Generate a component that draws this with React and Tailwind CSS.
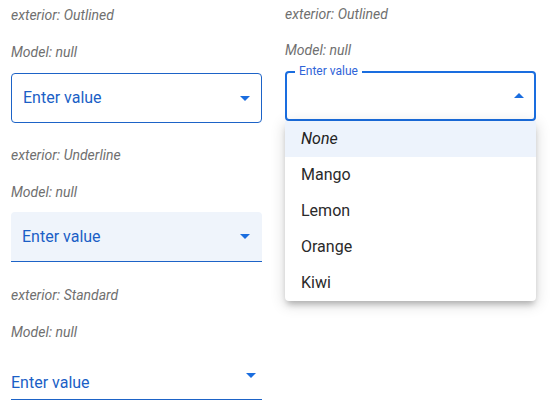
import React from "react";

function Caret({ up = false, className = "" }) {
  return (
    <svg width="10" height="5" viewBox="0 0 10 5" className={className}>
      <path d={up ? "M0 5 L10 5 L5 0 Z" : "M0 0 L10 0 L5 5 Z"} fill="#1a6ddf" />
    </svg>
  );
}

function Labels({ kind, shift = false }) {
  return (
    <>
      <div className={["text-[14px] leading-[16px] italic text-[#707070]", shift ? "mt-[6px]" : "mt-[7px]"].join(" ")}>
        exterior: {kind}
      </div>
      <div className={["text-[14px] leading-[16px] italic text-[#707070]", shift ? "mt-[20px]" : "mt-[21px]"].join(" ")}>
        Model: null
      </div>
    </>
  );
}

const fruits = ["Mango", "Lemon", "Orange", "Kiwi"];

export default function App() {
  return (
    <div
      className="flex gap-[23px] pl-[11px] bg-white w-[552px] h-[411px] overflow-hidden"
      style={{ fontFamily: "Roboto, 'Liberation Sans', sans-serif" }}
    >
      {/* Left column */}
      <div className="w-[251px] flex flex-col">
        <div className="h-[140px]">
          <Labels kind="Outlined" />
          <div className="mt-[13px] h-[50px] rounded-[4px] border border-[#1d63c7] flex items-center justify-between pl-[11px] pr-[11px]">
            <span className="text-[16px] text-[#1b5fc6]">Enter value</span>
            <Caret />
          </div>
        </div>
        <div className="h-[140px]">
          <Labels kind="Underline" />
          <div className="mt-[12px] h-[50px] rounded-t-[4px] bg-[#eff4fb] border-b border-[#1d63c7] flex items-center justify-between pl-[11px] pr-[12px]">
            <span className="text-[16px] text-[#1b5fc6]">Enter value</span>
            <Caret />
          </div>
        </div>
        <div className="h-[131px]">
          <Labels kind="Standard" />
          <div className="mt-[13px] h-[47px] border-b border-[#1d63c7] flex items-start justify-between pr-[6px] pt-[20px]">
            <span className="text-[16px] leading-[19px] text-[#1b5fc6]">Enter value</span>
            <Caret />
          </div>
        </div>
      </div>

      {/* Right column */}
      <div className="w-[251px] relative">
        <Labels kind="Outlined" shift />
        <div className="relative mt-[13px] h-[50px] rounded-[4px] border-2 border-[#1a6ddf] flex items-center justify-end pr-[10px]">
          <span className="absolute -top-[9px] left-[8px] bg-white px-[4px] text-[12px] leading-[14px] text-[#2f64d8]">
            Enter value
          </span>
          <Caret up className="-mt-[2px]" />
        </div>
        <div className="absolute left-0 top-[121px] w-[251px] bg-white rounded-[4px] shadow-[0_5px_6px_-2px_rgba(0,0,0,0.25),0_3px_14px_2px_rgba(0,0,0,0.12)]">
          <div className="h-[36px] bg-[#edf3fc] flex items-center pl-[16px] text-[16px] italic text-[#222]">None</div>
          {fruits.map(f => (
            <div key={f} className="h-[36px] flex items-center pl-[16px] text-[16px] text-[#2a2a2a]">{f}</div>
          ))}
        </div>
      </div>
    </div>
  );
}
